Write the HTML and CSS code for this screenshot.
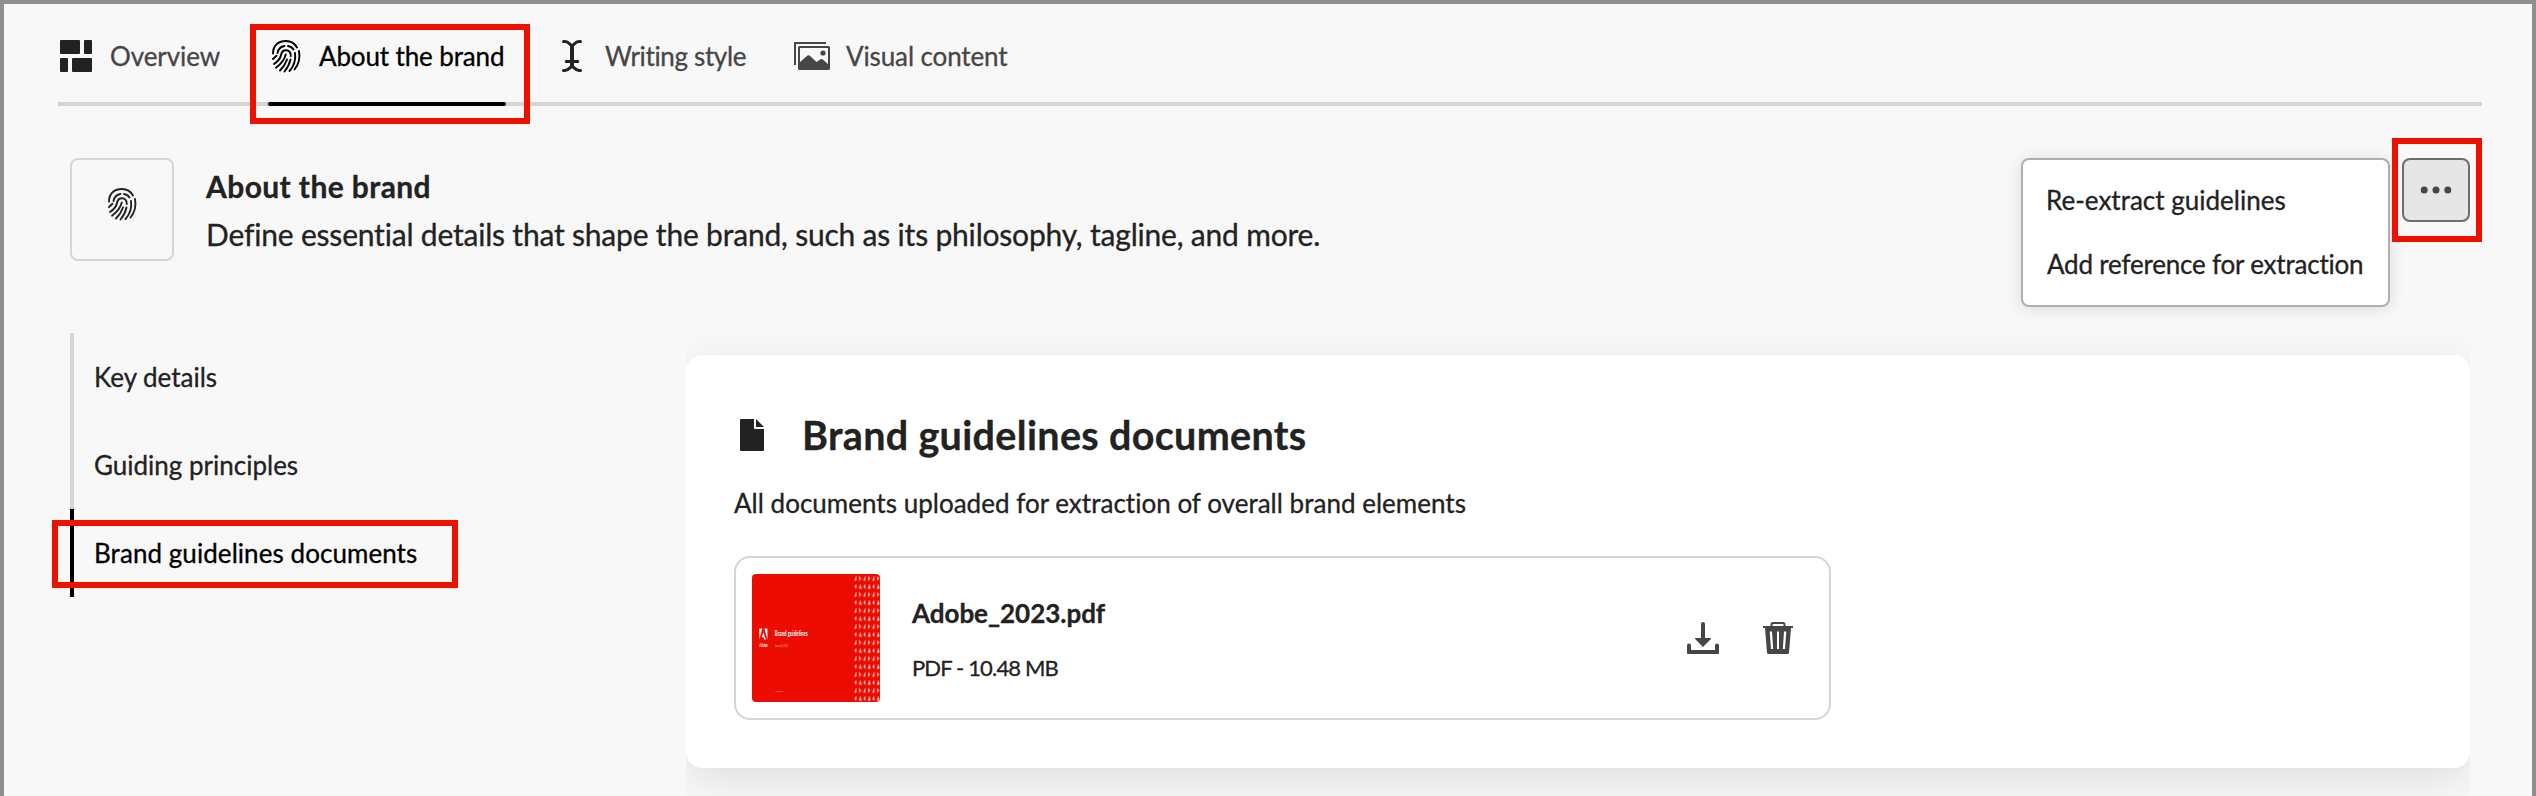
FILE: index.html
```
<!DOCTYPE html>
<html lang="en">
<head>
<meta charset="utf-8">
<title>About the brand</title>
<link rel="stylesheet" href="styles.css">
</head>
<body>
<svg class="defs" width="0" height="0">
  <symbol id="fingerprint" viewBox="0 0 36 36">
    <g fill="none" stroke="currentColor" stroke-width="1.9" stroke-linecap="round">
      <path d="M5 15.5C5 7 11 3 18 3c4.500 0 8.500 2 11 6.500"/>
      <path d="M31 13c1.300 7 0 13-4.500 18.500"/>
      <path d="M9.500 15c.7-4 3.500-6.500 7-7"/>
      <path d="M20 8c2.500.3 4.500 1.700 5.500 3.500"/>
      <path d="M27 15c1 7-1 13-5.500 18"/>
      <path d="M5 21l3.500-3.300"/>
      <path d="M6 26c4.500-3 6.500-6 7-9 .7-3.500 3-4.700 5-4.700 3 0 5 2.200 4.800 5.700"/>
      <path d="M22.500 21.500c-1 4.500-3 8.500-6 12"/>
      <path d="M8 29.800c5-3.800 8.500-8.300 9.800-13.300"/>
      <path d="M12 32.500c3.200-3.200 5.600-6.800 7-11"/>
    </g>
  </symbol>
</svg>
<div class="frame">
  <nav class="tabs">
    <div class="tab tab-overview">
      <svg class="icon dark" viewBox="0 0 36 36"><rect x="2" y="2" width="20" height="14" rx="1"/><rect x="26" y="2" width="8" height="14" rx="1"/><rect x="2" y="20" width="8" height="14" rx="1"/><rect x="14" y="20" width="20" height="14" rx="1"/></svg>
      <span>Overview</span>
    </div>
    <div class="tab tab-about active">
      <svg class="icon"><use href="#fingerprint"/></svg>
      <span>About the brand</span>
      <i class="mark"></i>
    </div>
    <div class="tab tab-writing">
      <svg class="icon dark" viewBox="0 0 36 36"><path d="M9.500 3.500h1.500c3 0 4.300 2.200 7 4.500 2.700-2.300 4-4.500 7-4.500h1.500M9.500 32.500h1.500c3 0 4.300-2.200 7-4.500 2.700 2.300 4 4.500 7 4.500h1.500M12.200 23.500h11.600" fill="none" stroke="currentColor" stroke-width="3" stroke-linecap="round"/><path d="M16 7h4v22h-4z"/></svg>
      <span>Writing style</span>
    </div>
    <div class="tab tab-visual">
      <svg class="icon" viewBox="0 0 36 36"><path d="M1 27V5h31" fill="none" stroke="currentColor" stroke-width="2" stroke-linejoin="round"/><rect x="5" y="9" width="30" height="22" rx=".6" fill="none" stroke="currentColor" stroke-width="2"/><circle cx="29" cy="15" r="2.600"/><path d="M5 25l8.500-7.500Q14.500 17 15.500 17.500L22.500 24l4-2.800q1-.5 2 0L35 27v4H5z"/></svg>
      <span>Visual content</span>
    </div>
  </nav>

  <header class="header">
    <div class="tile"><svg class="icon"><use href="#fingerprint"/></svg></div>
    <div class="intro">
      <h1>About the brand</h1>
      <p>Define essential details that shape the brand, such as its philosophy, tagline, and more.</p>
    </div>
    <div class="menu">
      <div class="re-extract">Re-extract guidelines</div>
      <div class="add-ref">Add reference for extraction</div>
    </div>
    <div class="more">
      <svg viewBox="0 0 36 36" class="icon"><circle cx="6.200" cy="18" r="3.500"/><circle cx="18" cy="18" r="3.500"/><circle cx="29.800" cy="18" r="3.500"/></svg>
      <i class="mark"></i>
    </div>
  </header>

  <div class="content">
    <ul class="sections">
      <li>Key details</li>
      <li>Guiding principles</li>
      <li class="current">Brand guidelines documents<i class="mark"></i></li>
    </ul>
    <main class="pane">
      <section class="card">
        <h2><svg class="icon" viewBox="0 0 36 36"><path d="M20 2H7a1 1 0 0 0-1 1v30a1 1 0 0 0 1 1h22a1 1 0 0 0 1-1V12H21a1 1 0 0 1-1-1z"/><path d="M22 2v8h8z"/></svg><span>Brand guidelines documents</span></h2>
        <p class="lead">All documents uploaded for extraction of overall brand elements</p>
        <div class="file">
          <svg class="thumb" viewBox="0 0 128 128">
            <defs><pattern id="glyphs" x="102" y="0.500" width="9" height="16" patternUnits="userSpaceOnUse">
              <path d="M.5 6L2.200 2v4zM5.300 2l2 2-2 2zM2.200 10v4l-1.700-2zM5 14l1.300-4L7.500 14z" fill="#ffc4bd" stroke="#ffc4bd" stroke-width=".4"/>
            </pattern></defs>
            <rect width="128" height="128" fill="#ed0c00"/>
            <rect x="102" y="0.500" width="26" height="127" fill="url(#glyphs)"/>
            <path d="M7.300 54.500h3L7.300 65.500zM12.400 54.500h3v11zM11.300 58.500l2.600 7h-1.700l-.8-2.200H9.700z" fill="#fff"/>
            <g fill="#fff" font-family="Lato" font-weight="700">
              <text x="7.500" y="73.300" font-size="4.600" textLength="8" lengthAdjust="spacingAndGlyphs">Adobe</text>
              <text x="22.800" y="61.500" font-size="8" textLength="33" lengthAdjust="spacingAndGlyphs">Brand guidelines</text>
              <text x="23" y="73" font-size="3.400" font-weight="400" opacity=".65" textLength="13" lengthAdjust="spacingAndGlyphs">January 25, 2023</text>
              <text x="23" y="117.500" font-size="2.600" font-weight="400" opacity=".65" textLength="8" lengthAdjust="spacingAndGlyphs">Adobe Brand</text>
            </g>
          </svg>
          <div class="meta">
            <div class="name">Adobe_2023.pdf</div>
            <div class="size">PDF - 10.48 MB</div>
          </div>
          <div class="actions">
            <svg class="icon" viewBox="0 0 36 36"><path d="M16 4a2 2 0 0 1 4 0v14h5.500a.6.600 0 0 1 .4 1L18 27l-7.900-8a.6.600 0 0 1 .4-1H16z"/><path d="M2 25.500a1.500 1.500 0 0 1 4 0V30h24v-4.500a1.500 1.500 0 0 1 4 0V33a1 1 0 0 1-1 1H3a1 1 0 0 1-1-1z"/></svg>
            <svg class="icon" viewBox="0 0 36 36"><path d="M11.500 7V4.500A1.500 1.500 0 0 1 13 3h10a1.500 1.500 0 0 1 1.500 1.500V7" fill="none" stroke="currentColor" stroke-width="2"/><path fill-rule="evenodd" d="M3 6h30v2h-2l-2 24.500a1.600 1.600 0 0 1-1.600 1.500H8.600A1.600 1.600 0 0 1 7 32.500L5 8H3zM9.700 11.500l1.300 17.500h2.200L12 11.500zM17 11.500V29h2V11.500zM24 11.500L22.800 29H25l1.300-17.500z"/></svg>
          </div>
        </div>
      </section>
    </main>
  </div>
</div>
</body>
</html>
```
FILE: styles.css
```
* { box-sizing: border-box; }
body { margin: 0; }
h1, h2, p, ul { margin: 0; padding: 0; }
.defs { display: block; }

.frame {
  height: 796px;
  overflow: hidden;
  border: 4px solid #8f8f8f;
  border-bottom: 0;
  background: #f8f8f8;
  color: #222;
  font: 26px/32px Lato, "Open Sans", sans-serif;
  font-variant-ligatures: none;
  -webkit-text-stroke: 0.3px currentColor;
  white-space: nowrap;
}
.frame svg { -webkit-text-stroke: 0; }
.icon { flex: none; width: 36px; height: 36px; fill: currentColor; display: block; }
.dark { color: #222; }
.mark { position: absolute; border: 6px solid #ee1100; }

.tabs {
  display: flex;
  gap: 48px;
  margin: 0 50px 0 54px;
  padding-top: 32px;
  border-bottom: 4px solid #d5d5d5;
  color: #464646;
}
.tab {
  position: relative;
  display: flex;
  align-items: center;
  gap: 16px;
  height: 70px;
  margin-bottom: -4px;
  padding-bottom: 30px;
  line-height: 40px;
}
.tab-overview { width: 162px; letter-spacing: -0.08px; }
.tab-about { width: 238px; letter-spacing: -0.13px; }
.tab-about span, .tab-writing span { margin-left: -1px; }
.tab-writing { width: 192px; letter-spacing: -0.35px; }
.tab-visual { letter-spacing: -0.12px; }
.active { color: #000; }
.active::after {
  content: "";
  position: absolute;
  left: 0;
  right: 0;
  top: 66px;
  height: 4px;
  border-radius: 2px;
  background: #000;
}
.tab-about .mark { left: -18px; top: -12px; width: 280px; height: 100px; }

.header {
  display: flex;
  align-items: flex-start;
  margin: 52px 62px 0 66px;
  height: 104px;
}
.tile {
  display: flex;
  align-items: center;
  justify-content: center;
  width: 104px;
  height: 103px;
  padding-bottom: 11px;
  border: 2px solid #d5d5d5;
  border-radius: 8px;
}
.intro { flex: 1; padding: 4px 0 0 32px; font-size: 30px; line-height: 48px; letter-spacing: -0.195px; }
.intro h1 { font-size: 30px; font-weight: 700; letter-spacing: 0.4px; }
.menu {
  width: 369px;
  height: 149px;
  margin-right: 12px;
  padding: 8px 23px;
  border: 2px solid #afafaf;
  border-radius: 8px;
  background: #fff;
  box-shadow: 0 2px 16px rgba(0, 0, 0, 0.12);
  line-height: 64px;
}
.add-ref { letter-spacing: -0.2px; padding-left: 1px; }
.more {
  position: relative;
  display: flex;
  justify-content: center;
  width: 68px;
  height: 64px;
  padding-top: 12px;
  border: 2px solid #6d6d6d;
  border-radius: 8px;
  background: #e6e6e6;
  color: #464646;
}
.more .mark { left: -12px; top: -22px; width: 90px; height: 104px; }

.content { display: flex; height: 534px; padding: 0 62px 0 66px; }
.sections { width: 616px; padding-top: 71px; list-style: none; }
.sections li { position: relative; height: 88px; padding-left: 20px; border-left: 4px solid #d5d5d5; line-height: 88px; }
.sections .current { color: #000; border-color: #000; letter-spacing: 0.06px; }
.current .mark { left: -22px; top: 11px; width: 406px; height: 68px; }

.pane { flex: 1; padding-top: 93px; overflow: hidden; }
.card {
  height: 413px;
  padding: 56px 48px 0;
  border-radius: 16px;
  background: #fff;
  box-shadow: 0 12px 40px rgba(0, 0, 0, 0.1);
}
.card h2 { display: flex; align-items: center; gap: 32px; font-size: 39.5px; line-height: 48px; letter-spacing: 0.33px; }
.lead { margin: 28px 0 37px; letter-spacing: 0.02px; }
.file {
  display: flex;
  align-items: center;
  gap: 32px;
  width: 1097px;
  height: 164px;
  padding: 16px;
  border: 2px solid #d5d5d5;
  border-radius: 16px;
}
.thumb { width: 128px; height: 128px; border-radius: 4px; }
.meta { flex: 1; padding-top: 2px; }
.name { font-weight: 700; letter-spacing: -0.03px; }
.size { margin-top: 25px; font-size: 22px; line-height: 28px; letter-spacing: -0.85px; }
.actions { display: flex; gap: 39px; margin-right: 17px; color: #464646; }
```
